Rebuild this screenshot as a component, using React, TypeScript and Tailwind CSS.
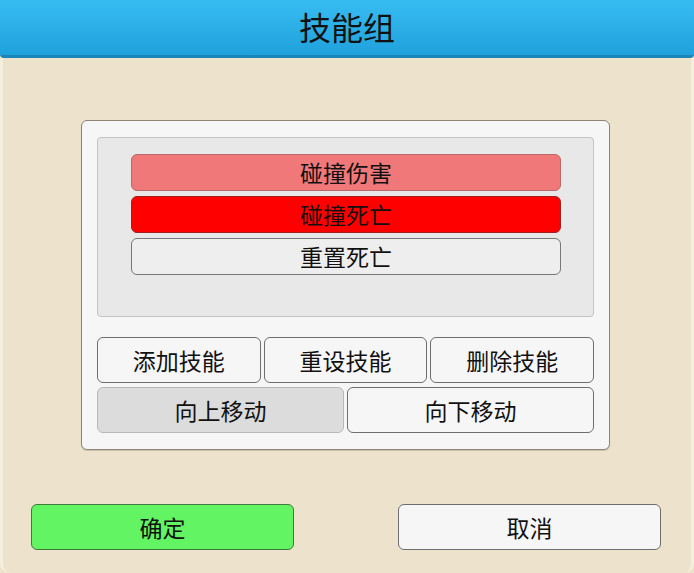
import React, { useState } from 'react';

const font = { fontFamily: '"Noto Sans CJK SC", "Noto Sans", sans-serif' };

const skills = ['碰撞伤害', '碰撞死亡', '重置死亡'];

export default function App() {
  const [selected, setSelected] = useState(1);

  const itemClass = (i: number) => {
    if (i === selected) return 'bg-[#fe0000] border-[#a02020]';
    if (i === 0) return 'bg-[#f07878] border-[#b86868]';
    return 'bg-[#eeeeee] border-[#777777]';
  };

  return (
    <div className="w-[694px] h-[573px] flex flex-col bg-[#ede3cc] text-[#111]" style={font}>
      <div className="h-[58px] shrink-0 flex items-center justify-center bg-gradient-to-b from-[#37bcf2] to-[#1fa2dc] border-b-[3px] border-[#1a86ba] rounded-b-[4px]">
        <span className="text-[32px] leading-none -mt-[3px]">技能组</span>
      </div>

      <div className="flex-1 flex flex-col border-x-[3px] border-[#f5eedd] rounded-b-[10px]">
        <div className="mt-[62px] ml-[78px] w-[529px] h-[330px] bg-[#f6f6f6] border border-[#8c8474] rounded-[6px] px-[15px] pt-[16px] flex flex-col shadow-[0_1px_1px_rgba(0,0,0,0.15)]">
          <div className="h-[180px] bg-[#e8e8e8] border border-[#c4c4c4] rounded-[4px] pt-[16px] pl-[33px] flex flex-col gap-[5px]">
            {skills.map((s, i) => (
              <button
                key={s}
                onClick={() => setSelected(i)}
                className={`w-[430px] h-[37px] border rounded-[6px] text-[23px] leading-none flex items-center justify-center ${itemClass(i)}`}
              >
                {s}
              </button>
            ))}
          </div>

          <div className="mt-[20px] flex gap-[3px]">
            {['添加技能', '重设技能', '删除技能'].map((t) => (
              <button
                key={t}
                className="flex-1 h-[46px] bg-[#f6f6f6] border border-[#6e6e6e] rounded-[6px] text-[23px] leading-none flex items-center justify-center"
              >
                {t}
              </button>
            ))}
          </div>
          <div className="mt-[4px] flex gap-[3px]">
            <button className="flex-1 h-[46px] bg-[#dcdcdc] border border-[#b8b8b8] rounded-[6px] text-[23px] leading-none flex items-center justify-center">
              向上移动
            </button>
            <button className="flex-1 h-[46px] bg-[#f6f6f6] border border-[#6e6e6e] rounded-[6px] text-[23px] leading-none flex items-center justify-center">
              向下移动
            </button>
          </div>
        </div>

        <div className="mt-[54px] flex justify-between pl-[28px] pr-[30px]">
          <button className="w-[263px] h-[46px] bg-[#62f462] border border-[#3d7a3d] rounded-[6px] text-[23px] leading-none flex items-center justify-center">
            确定
          </button>
          <button className="w-[263px] h-[46px] bg-[#f6f6f6] border border-[#6e6e6e] rounded-[6px] text-[23px] leading-none flex items-center justify-center">
            取消
          </button>
        </div>
      </div>
    </div>
  );
}
